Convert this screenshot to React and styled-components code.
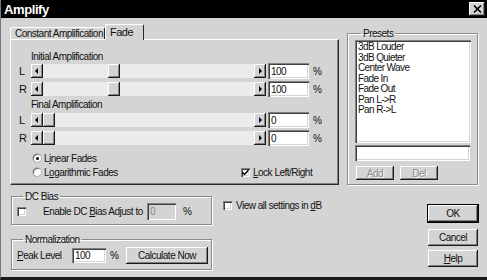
import React from 'react'
import styled, { createGlobalStyle, css } from 'styled-components'

const GlobalStyle = createGlobalStyle`
  html, body {
    margin: 0;
    padding: 0;
    background: #d4d4d4;
  }
  body {
    font-family: "Liberation Sans", Arial, sans-serif;
    font-size: 10px;
    letter-spacing: -0.5px;
    color: #111;
  }
`;

const raised = css`
  background: #d4d4d4;
  box-shadow: inset -1px -1px #1a1a1a, inset 1px 1px #fff, inset -2px -2px #808080;
`;

const sunken = css`
  box-shadow: inset 1px 1px #808080, inset 2px 2px #404040, inset -1px -1px #fff, inset -2px -2px #d4d4d4;
`;

const Window = styled.div`
  width: 487px;
  height: 280px;
  box-sizing: border-box;
  background: #d4d4d4;
  border-left: 1px solid #7a7a7a;
  border-bottom: 3px solid #1a1a1a;
  display: flex;
  flex-direction: column;
  overflow: hidden;
`;

const TitleBar = styled.div`
  height: 18px;
  flex-shrink: 0;
  background: #000;
  display: flex;
  align-items: center;
  justify-content: space-between;
  padding: 0 2px 0 3px;
`;

const Title = styled.div`
  color: #fff;
  font-weight: bold;
  font-size: 13px;
  letter-spacing: -0.4px;
`;

const CloseBtn = styled.div`
  ${raised};
  width: 16px;
  height: 14px;
  display: flex;
  align-items: center;
  justify-content: center;
`;

const Body = styled.div`
  padding: 6px 0 0 9px;
  display: flex;
  flex-direction: column;
`;

const TopRow = styled.div`
  display: flex;
  align-items: flex-start;
`;

const TabArea = styled.div`
  width: 329px;
  display: flex;
  flex-direction: column;
`;

const TabStrip = styled.div`
  display: flex;
  align-items: flex-end;
  height: 15px;
  position: relative;
  z-index: 1;
`;

const Tab = styled.div`
  width: ${({ $w }) => $w}px;
  box-sizing: border-box;
  border-top: 1px solid #fff;
  border-left: 1px solid #fff;
  border-right: 1px solid #2a2a2a;
  border-radius: 2px 2px 0 0;
  padding: 0 3px 1px 4px;
  display: flex;
  align-items: center;
  white-space: nowrap;
  ${({ $active }) => $active ? css`
    height: 16px;
    margin-bottom: -1px;
    background: #d4d4d4;
    font-size: 11px;
    padding-bottom: 2px;
  ` : css`
    height: 12px;
    font-size: 10px;
  `}
`;

const Panel = styled.div`
  height: 146px;
  box-sizing: border-box;
  border-top: 1px solid #fff;
  border-left: 1px solid #fff;
  border-right: 1px solid #2a2a2a;
  border-bottom: 1px solid #2a2a2a;
  box-shadow: inset -1px -1px #808080;
  padding-top: 11px;
`;

const SectionLabel = styled.div`
  margin: ${({ $mt }) => $mt || 0}px 0 0 20px;
  height: 11px;
  line-height: 11px;
`;

const SliderRow = styled.div`
  display: flex;
  align-items: center;
  height: 16px;
  margin-top: ${({ $mt }) => $mt}px;
`;

const Channel = styled.div`
  width: 20px;
  box-sizing: border-box;
  padding-left: 8px;
  font-size: 11px;
`;

const Track = styled.div`
  width: 235px;
  height: 14px;
  display: flex;
  background: #ebebeb;
`;

const ArrowBtn = styled.div`
  ${raised};
  width: 12px;
  height: 14px;
  flex-shrink: 0;
  display: flex;
  align-items: center;
  justify-content: center;
  ${({ $right }) => $right && css`margin-left: auto;`}
  &::after {
    content: '';
    width: 0;
    height: 0;
    border-top: 3px solid transparent;
    border-bottom: 3px solid transparent;
    ${({ $right }) => $right
      ? css`border-left: 3px solid #000; margin-left: 1px;`
      : css`border-right: 3px solid #000; margin-right: 1px;`}
  }
`;

const Thumb = styled.div`
  ${raised};
  width: 12px;
  height: 14px;
  flex-shrink: 0;
  margin-left: ${({ $pos }) => $pos}px;
`;

const TextBox = styled.div`
  ${sunken};
  width: ${({ $w }) => $w}px;
  height: ${({ $h }) => $h || 16}px;
  box-sizing: border-box;
  background: ${({ $disabled }) => $disabled ? '#d4d4d4' : '#fff'};
  color: ${({ $disabled }) => $disabled ? '#8a8a8a' : '#111'};
  margin-left: ${({ $ml }) => $ml || 0}px;
  padding: 0 0 0 3px;
  display: flex;
  align-items: center;
  flex-shrink: 0;
`;

const Pct = styled.div`
  margin-left: ${({ $ml }) => $ml}px;
`;

const OptionsRow = styled.div`
  display: flex;
  align-items: flex-end;
  margin-top: 5px;
  padding-left: 22px;
`;

const RadioCol = styled.div`
  width: 208px;
  display: flex;
  flex-direction: column;
`;

const Option = styled.div`
  display: flex;
  align-items: center;
  height: 14px;
  gap: ${({ $gap }) => $gap || 3}px;
  margin: ${({ $m }) => $m || '0'};
  white-space: nowrap;
`;

const Radio = styled.div`
  width: 8px;
  height: 8px;
  border-radius: 50%;
  background: #fff;
  box-shadow: inset 1px 1px #707070, 0 0 0 0.5px #909090;
  display: flex;
  align-items: center;
  justify-content: center;
  &::after {
    content: '';
    width: 3px;
    height: 3px;
    border-radius: 50%;
    background: ${({ $on }) => $on ? '#000' : 'transparent'};
  }
`;

const Check = styled.div`
  ${sunken};
  width: 9px;
  height: 9px;
  background: #fff;
  display: flex;
  align-items: center;
  justify-content: center;
  flex-shrink: 0;
`;

const Group = styled.fieldset`
  margin: ${({ $m }) => $m || 0};
  padding: ${({ $p }) => $p || 0};
  width: ${({ $w }) => $w}px;
  height: ${({ $h }) => $h}px;
  box-sizing: border-box;
  border: 1px solid #8a8a8a;
  box-shadow: inset 1px 1px #fff, 1px 1px #fff;
  min-width: 0;
`;

const Legend = styled.legend`
  padding: 0 2px;
  margin-left: 6px;
  line-height: 11px;
`;

const ListBox = styled.div`
  ${sunken};
  width: 116px;
  height: 103px;
  box-sizing: border-box;
  background: #fff;
  padding: 2px 3px;
  font-size: 10px;
  letter-spacing: -0.6px;
`;

const ListItem = styled.div`
  line-height: 10.5px;
  height: 10.5px;
  white-space: nowrap;
`;

const SmallBtns = styled.div`
  display: flex;
  gap: 6px;
  margin-top: 5px;
  padding-left: 1px;
`;

const Button = styled.div`
  ${raised};
  width: ${({ $w }) => $w}px;
  height: ${({ $h }) => $h}px;
  box-sizing: border-box;
  display: flex;
  align-items: center;
  justify-content: center;
  white-space: nowrap;
  margin-top: ${({ $mt }) => $mt || 0}px;
  ${({ $disabled }) => $disabled && css`
    color: #8a8a8a;
    text-shadow: 1px 1px #fff;
  `}
  ${({ $default }) => $default && css`
    box-shadow: 0 0 0 1px #000, inset -1px -1px #1a1a1a, inset 1px 1px #fff, inset -2px -2px #808080;
  `}
`;

const BottomRow = styled.div`
  display: flex;
  align-items: flex-start;
  margin-top: 6px;
  padding-left: 1px;
`;

const GroupCol = styled.div`
  width: 201px;
  display: flex;
  flex-direction: column;
`;

const FormGrid = styled.div`
  display: grid;
  grid-template-columns: ${({ $cols }) => $cols};
  align-items: center;
`;

const ButtonCol = styled.div`
  margin-left: auto;
  margin-right: 9px;
  margin-top: 14px;
  display: flex;
  flex-direction: column;
`;

const U = styled.span`
  text-decoration: underline;
`;

const CheckMark = () => (
  <svg width="7" height="7" viewBox="0 0 7 7">
    <path d="M0.5 3.5 L2.5 5.5 L6.5 1" stroke="#000" strokeWidth="1.5" fill="none" />
  </svg>
);

const Slider = ({ ch, pos, value, mt }) => (
  <SliderRow $mt={mt}>
    <Channel>{ch}</Channel>
    <Track>
      <ArrowBtn />
      <Thumb $pos={pos} />
      <ArrowBtn $right />
    </Track>
    <TextBox $w={41} $ml={2}>{value}</TextBox>
    <Pct $ml={4}>%</Pct>
  </SliderRow>
);

const presets = ['3dB Louder', '3dB Quieter', 'Center Wave', 'Fade In', 'Fade Out', 'Pan L->R', 'Pan R->L'];

export default function App() {
  return (
    <>
      <GlobalStyle />
      <Window>
        <TitleBar>
          <Title>Amplify</Title>
          <CloseBtn>
            <svg width="9" height="8" viewBox="0 0 9 8">
              <path d="M1 0.5 L8 7.5 M8 0.5 L1 7.5" stroke="#000" strokeWidth="1.6" />
            </svg>
          </CloseBtn>
        </TitleBar>
        <Body>
          <TopRow>
            <TabArea>
              <TabStrip>
                <Tab $w={95}>Constant Amplification</Tab>
                <Tab $w={39} $active>Fade</Tab>
              </TabStrip>
              <Panel>
                <SectionLabel>Initial Amplification</SectionLabel>
                <Slider ch="L" pos={65} value="100" mt={1} />
                <Slider ch="R" pos={65} value="100" mt={2} />
                <SectionLabel $mt={2}>Final Amplification</SectionLabel>
                <Slider ch="L" pos={0} value="0" mt={2} />
                <Slider ch="R" pos={0} value="0" mt={2} />
                <OptionsRow>
                  <RadioCol>
                    <Option><Radio $on /><span>L<U>i</U>near Fades</span></Option>
                    <Option><Radio /><span>L<U>o</U>garithmic Fades</span></Option>
                  </RadioCol>
                  <Option>
                    <Check><CheckMark /></Check>
                    <span><U>L</U>ock Left/Right</span>
                  </Option>
                </OptionsRow>
              </Panel>
            </TabArea>
            <Group $m="4px 0 0 8px" $p="1px 7px 0 7px" $w={131} $h={157}>
              <Legend>Presets</Legend>
              <ListBox>
                {presets.map(p => <ListItem key={p}>{p}</ListItem>)}
              </ListBox>
              <TextBox $w={115} $h={16} style={{ marginTop: 2 }} />
              <SmallBtns>
                <Button $w={38} $h={14} $disabled>Add</Button>
                <Button $w={38} $h={14} $disabled>Del</Button>
              </SmallBtns>
            </Group>
          </TopRow>
          <BottomRow>
            <GroupCol>
              <Group $p="1px 0 0 5px" $w={201} $h={34}>
                <Legend>DC Bias</Legend>
                <FormGrid $cols="26px 104px 29px auto">
                  <Check />
                  <span>Enable DC <U>B</U>ias Adjust to</span>
                  <TextBox $w={29} $h={17} $disabled>0</TextBox>
                  <Pct $ml={7}>%</Pct>
                </FormGrid>
              </Group>
              <Group $m="9px 0 0 0" $p="2px 0 0 5px" $w={201} $h={36}>
                <Legend>Normalization</Legend>
                <FormGrid $cols="55px 34px 20px 82px">
                  <span><U>P</U>eak Level</span>
                  <TextBox $w={34} $h={15}>100</TextBox>
                  <Pct $ml={4}>%</Pct>
                  <Button $w={82} $h={17}>Calculate Now</Button>
                </FormGrid>
              </Group>
            </GroupCol>
            <Option $m="7px 0 0 11px" $gap={4}>
              <Check />
              <span>View all settings in <U>d</U>B</span>
            </Option>
            <ButtonCol>
              <Button $w={50} $h={17} $default>OK</Button>
              <Button $w={50} $h={17} $mt={7}>Cancel</Button>
              <Button $w={50} $h={17} $mt={4}><span><U>H</U>elp</span></Button>
            </ButtonCol>
          </BottomRow>
        </Body>
      </Window>
    </>
  )
}
